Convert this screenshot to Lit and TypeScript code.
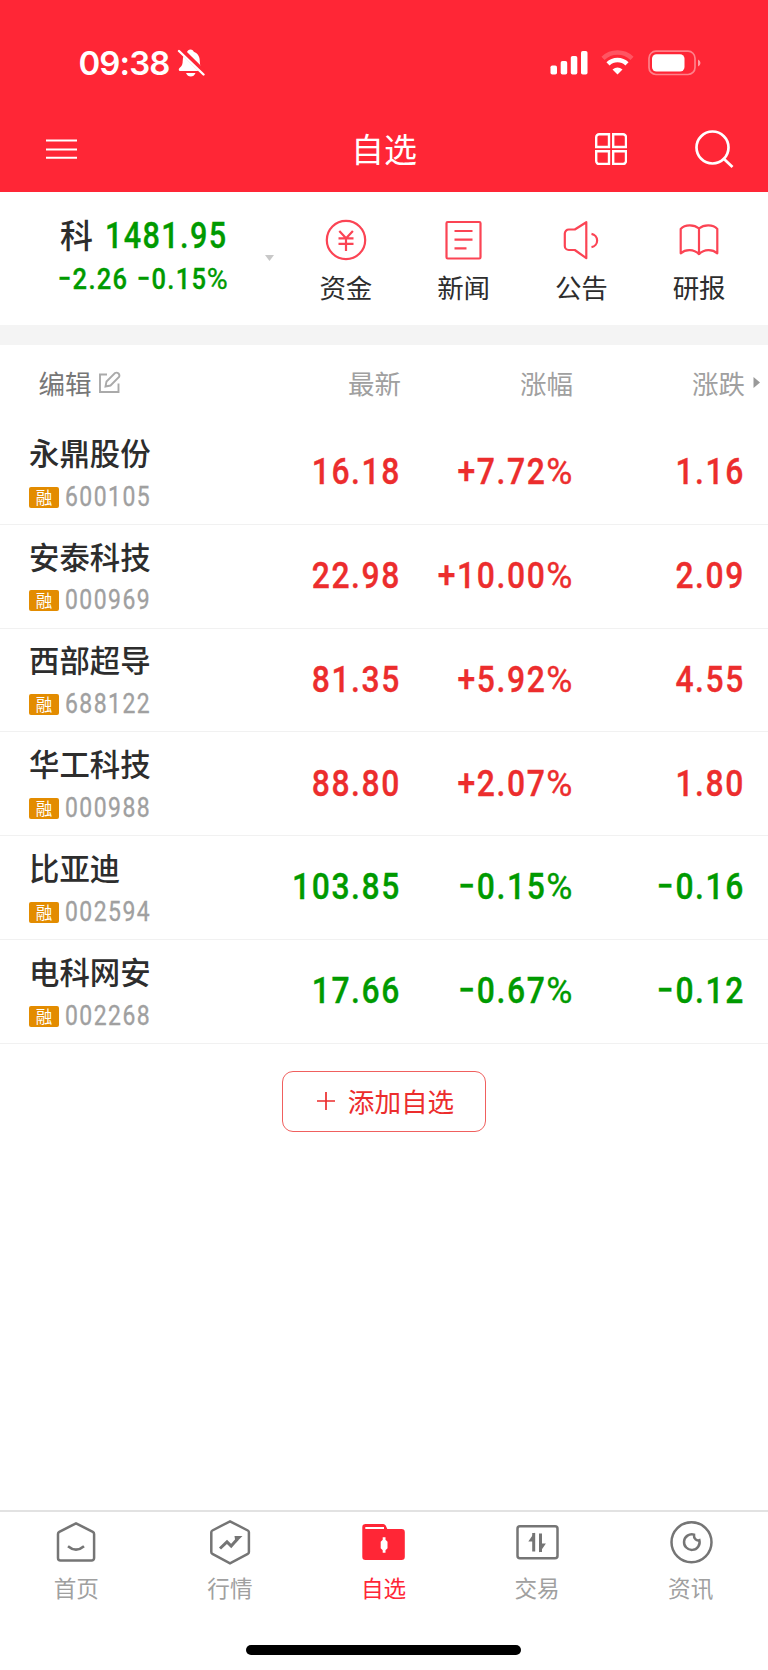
import { LitElement, html, css, svg } from "lit";
import { customElement, property } from "lit/decorators.js";

interface Stock {
  name: string;
  code: string;
  price: string;
  pct: string;
  diff: string;
}

const STOCKS: Stock[] = [
  { name: "永鼎股份", code: "600105", price: "16.18", pct: "+7.72%", diff: "1.16" },
  { name: "安泰科技", code: "000969", price: "22.98", pct: "+10.00%", diff: "2.09" },
  { name: "西部超导", code: "688122", price: "81.35", pct: "+5.92%", diff: "4.55" },
  { name: "华工科技", code: "000988", price: "88.80", pct: "+2.07%", diff: "1.80" },
  { name: "比亚迪", code: "002594", price: "103.85", pct: "−0.15%", diff: "−0.16" },
  { name: "电科网安", code: "002268", price: "17.66", pct: "−0.67%", diff: "−0.12" },
];

/** Condensed figure, with a short minus sign and a light percent sign. */
@customElement("app-figure")
class AppFigure extends LitElement {
  @property() value = "";
  static styles = css`
    :host { display: inline-block; white-space: nowrap; font-family: Roboto, sans-serif; font-weight: 500;
      font-size: 37.500px; line-height: 1; letter-spacing: 0.05em; transform: scaleX(0.85); transform-origin: 100% 50%; -webkit-text-stroke: 0.350px currentColor; }
    .minus { display: inline-block; transform: scaleX(0.92); transform-origin: 60% 50%; }
    .percent { font-weight: 400; letter-spacing: 0.02em; display: inline-block; transform: scaleX(1.12); transform-origin: 100% 50%; margin-left: 0.08em; }
  `;
  render() {
    return [...this.value].map((c) =>
      c === "−" ? html`<span class="minus">−</span>` : c === "%" ? html`<span class="percent">%</span>` : c
    );
  }
}

const ACTIONS = [
  { label: "资金", icon: svg`<circle cx="22" cy="22" r="19.200"/><path d="M15.300 13l6.800 7.300 6.800-7.300M14.500 20.300h15M14.500 25.900h15M22 20.300v12.700"/>` },
  { label: "新闻", icon: svg`<rect x="4.500" y="4" width="34" height="36.500" rx="1.200"/><path d="M12.500 13h18M12.500 21.700h18M12.500 30.300h12"/>` },
  { label: "公告", icon: svg`<path d="M27.300 4.200v36l-11.500-8.200h-6a4 4 0 0 1-4-4V15.500a4 4 0 0 1 4-4h6zM32.500 15.800a6.800 6.800 0 0 1 0 13.400"/>` },
  { label: "研报", icon: svg`<path d="M22 10.500C17 6.300 8 6.200 3.700 11v24.300c5-4.300 13-4.300 18.300.8V10.500c5-4.200 14-4.300 18.300.5v24.300c-5-4.300-13-4.300-18.300.8"/>` },
];

const TABS = [
  { label: "首页", icon: svg`<path d="M23 5.300L39.800 13.800a2.500 2.500 0 0 1 1.300 2.200V40a2.500 2.500 0 0 1-2.500 2.500H7.500A2.500 2.500 0 0 1 5 40V16a2.500 2.500 0 0 1 1.300-2.200z"/><path d="M15 28.200q8 6.800 16 0"/>` },
  { label: "行情", icon: svg`<path d="M23 3.300L40.800 12.500a2 2 0 0 1 1.100 1.800V34a2 2 0 0 1-1.100 1.800L23 45.300 5.400 35.800A2 2 0 0 1 4.300 34V14.300a2 2 0 0 1 1.100-1.800z"/><path class="bar" d="M13 30.500l7-6.600 4.200 4.200 6.200-7"/><path class="solid" d="M27.500 18h8l-7 7z"/>` },
  { label: "自选", icon: svg`<path class="solid" d="M2.300 9.200A3.200 3.200 0 0 1 5.500 6H23.300q1.500 0 2.400 1.500L27.300 11H41.600A3.200 3.200 0 0 1 44.800 14.200V38.800A3.200 3.200 0 0 1 41.600 42H5.500A3.200 3.200 0 0 1 2.300 38.800z"/><path class="slot" d="M5.300 10h18.700"/><path class="candle" d="M22.700 19.300h2.800v2.500l2 2v6.400l-2 2v2.500h-2.800v-2.500l-2-2v-6.400l2-2z"/>` },
  { label: "交易", icon: svg`<rect x="3.500" y="8.200" width="40" height="32" rx="2.500"/><path class="bar" d="M19.700 15v18.500M26.500 15.500v18.500"/><path class="solid" d="M20.500 14.500v9h-6.200zM25.700 34.500v-9h6.200z"/>` },
  { label: "资讯", icon: svg`<circle cx="23.500" cy="24.200" r="20"/><path d="M26 16.600a7.800 7.800 0 1 0 5.400 5.600q-2.200.7-3.800-.8-2-1.800-1.600-4.800z"/>` },
];

@customElement("app-root")
class AppRoot extends LitElement {
  static styles = css`
    * { box-sizing: border-box; }
    :host { display: flex; flex-direction: column; height: 1670px; width: 768px; background: #fff; overflow: hidden;
      font-family: "Noto Sans CJK SC", sans-serif; color: #2d2d2d; line-height: 1; }
    svg { display: block; fill: none; flex: none; }
    header { background: #ff2636; color: #fff; height: 191.700px; flex: none; padding-bottom: 18px; }
    .status { height: 125px; display: flex; align-items: center; padding: 0 67px 0 78.500px; }
    .clock { font: 600 33px/1 Inter, sans-serif; letter-spacing: -0.900px; width: 98px; padding-top: 1px; }
    .bell { margin-right: auto; }
    .wifi { margin: 0 14px 0 13px; }
    .nav { height: 48px; display: flex; align-items: center; padding: 0 34px 0 45.500px; }
    .title { font-size: 33px; font-weight: 400; margin: 0 178px 0 auto; padding-bottom: 1px; }
    .search { margin-left: 68px; }
    .strip { display: flex; height: 133.600px; flex: none; padding-right: 10px; }
    .index { width: 287px; display: flex; align-items: center; padding-left: 57px; }
    .quote { width: 208px; display: flex; flex-direction: column; gap: 10px; padding-bottom: 5px; color: #009a00; }
    .main { display: flex; align-items: center; gap: 12px; padding-left: 3px; }
    .board { color: #2d2d2d; font-size: 33px; font-weight: 500; padding-bottom: 3px; }
    .big { font-size: 36px; letter-spacing: 0.045em; transform-origin: 0 50%; }
    .small { font-size: 30px; letter-spacing: 0.05em; transform-origin: 0 50%; }
    .actions { flex: 1; display: grid; grid-template-columns: repeat(4, 1fr); }
    .action { display: flex; flex-direction: column; align-items: center; padding-top: 26px; gap: 12px; font-size: 26.500px; }
    .action svg { stroke: #fb4454; stroke-width: 2.200; stroke-linejoin: round; }
    .band { height: 19.300px; background: #f4f4f4; flex: none; }
    .cols { display: grid; grid-template-columns: 229px 172px 172px 172px 1fr; align-items: center; }
    .head { height: 76.500px; flex: none; font-size: 26.500px; color: #a0a0a0; text-align: right; }
    .edit { display: flex; align-items: center; gap: 6px; padding-left: 38.500px; color: #777; }
    .more { margin-left: 8px; }
    .row { height: 103.800px; flex: none; border-bottom: 1px solid #f1f1f1; text-align: right; color: #ec2d2d; }
    .row > app-figure { margin-bottom: 1px; }
    .row.down { color: #009a00; }
    .ident { text-align: left; padding: 2.500px 0 0 29px; color: #2d2d2d; }
    .name { font-size: 30.400px; font-weight: 500; white-space: nowrap; }
    .meta { display: flex; align-items: center; gap: 6px; margin-top: 16.500px; }
    .badge { width: 30px; height: 21px; border-radius: 2px; background: #e38c00; color: #fff; font-size: 16.500px; line-height: 21px; text-align: center; }
    .code { font-size: 27px; font-weight: 400; color: #a0a0a0; letter-spacing: 0.063em; transform-origin: 0 50%; }
    .add { align-self: center; margin-top: 27px; width: 204.500px; height: 61px; flex: none; display: flex; align-items: center; justify-content: center;
      gap: 13px; border: 1.300px solid #f0605e; border-radius: 11px; background: none; color: #ec2d2d; font: 400 26.600px/1 "Noto Sans CJK SC", sans-serif; padding: 0 0 0 3px; }
    .tabs { margin-top: auto; height: 160px; flex: none; border-top: 2px solid #e2e2e2; display: flex; flex-direction: column; align-items: center; padding-right: 1px; }
    .tabrow { display: grid; grid-template-columns: repeat(5, 1fr); width: 768px; height: 133px; }
    .tab { display: flex; flex-direction: column; align-items: center; gap: 10.500px; padding-top: 6px; font-size: 22.600px; color: #a0a0a0; }
    .tab svg { stroke: #757575; stroke-width: 2.500; }
    .tab .solid { fill: #757575; stroke: none; }
    .tab .bar { stroke-width: 3; }
    .tab.on { color: #ff2636; }
    .tab.on .solid { fill: #ff2636; }
    .tab .slot { stroke: #fff; stroke-width: 2; }
    .tab .candle { fill: #fff; stroke: none; }
    .home { width: 275px; height: 10px; border-radius: 5px; background: #000; }
  `;

  render() {
    return html`
      <header>
        <div class="status">
          <span class="clock">09:38</span>
          <svg class="bell" width="28" height="30" viewBox="0 0 28 30">
            <path fill="#fff" d="M13.500 1.500c1.800 0 3 1 3.300 2.300 4.200 1.500 6 5 6 9.500 0 4.500 1.500 6.500 3.700 8.500v1.200H2.500c-1-1-1-2 0-3 2.500-2 3.200-4 3.200-7 0-4.700 1.800-7.700 4.500-9.200.3-1.300 1.500-2.300 3.300-2.300zM9 25h9.500q-1.500 3.500-4.700 3.500T9 25z"/>
            <path d="M3.500 1.500l24 23.500" stroke="#ff2636" stroke-width="5.500"/>
            <path d="M2 3l24.500 23.500" stroke="#fff" stroke-width="2.400" stroke-linecap="round"/>
          </svg>
          <svg width="38" height="26" viewBox="0 0 38 26">
            <g fill="#fff"><rect x=".5" y="15.500" width="6.500" height="9" rx="1.800"/><rect x="10.700" y="11" width="6.500" height="13.500" rx="1.800"/><rect x="20.800" y="6" width="6.500" height="18.500" rx="1.800"/><rect x="31" y="1" width="6.500" height="23.500" rx="1.800"/></g>
          </svg>
          <svg class="wifi" width="33" height="26" viewBox="0 0 33 26">
            <path d="M2 8.300a21 21 0 0 1 29 0" stroke="#fff" stroke-opacity=".22" stroke-width="4.500"/>
            <path d="M7 13.800a13.600 13.600 0 0 1 19 0" stroke="#fff" stroke-width="4.500"/>
            <path d="M16.500 24.500l-5-5q5-4.200 10 0z" fill="#fff"/>
          </svg>
          <svg width="53" height="26" viewBox="0 0 53 26">
            <rect x="1" y="1.200" width="46" height="23.300" rx="7" stroke="#fff" stroke-opacity=".42" stroke-width="1.700"/>
            <rect x="4" y="4.200" width="32.500" height="17.300" rx="4.500" fill="#fff"/>
            <path d="M50 9.500q2.500 1 2.500 3.500T50 16.500z" fill="#fff" fill-opacity=".55"/>
          </svg>
        </div>
        <div class="nav">
          <svg width="31" height="20" viewBox="0 0 31 20"><path d="M0 1.500h31M0 10.500h31M0 18.800h31" stroke="#fff" stroke-width="2"/></svg>
          <span class="title">自选</span>
          <svg width="32" height="32" viewBox="0 0 32 32" stroke="#fff" stroke-width="2.400">
            <path d="M14 1.200v12.800H1.200V4.200a3 3 0 0 1 3-3zM18.200 1.200v12.800H31V4.200a3 3 0 0 0-3-3zM14 31V18.200H1.200V28a3 3 0 0 0 3 3zM18.200 31V18.200H31V28a3 3 0 0 1-3 3z"/>
          </svg>
          <svg class="search" width="39" height="39" viewBox="0 0 39 39" stroke="#fff" stroke-width="2.700"><circle cx="17.500" cy="17.500" r="16"/><path d="M29 29l8.500 8"/></svg>
        </div>
      </header>
      <section class="strip">
        <div class="index">
          <div class="quote">
            <div class="main"><span class="board">科</span><app-figure class="big" value="1481.95"></app-figure></div>
            <app-figure class="small" value="−2.26 −0.15%"></app-figure>
          </div>
          <svg width="9" height="6" viewBox="0 0 9 6"><path d="M0 0h9L4.500 6z" fill="#c8c8c8"/></svg>
        </div>
        <div class="actions">
          ${ACTIONS.map((a) => html`<div class="action"><svg width="44" height="44" viewBox="0 0 44 44">${a.icon}</svg><span>${a.label}</span></div>`)}
        </div>
      </section>
      <div class="band"></div>
      <div class="cols head">
        <span class="edit">编辑<svg width="23" height="23" viewBox="0 0 23 23" stroke="#aaa" stroke-width="1.900"><path d="M9 3.500H2v17.500h18.500V12.500M7.500 15.500l1-5L17 2q2-1 3.500.5t.5 3.500l-8.500 8.500z"/></svg></span>
        <span>最新</span><span>涨幅</span><span>涨跌</span>
        <svg class="more" width="8" height="11" viewBox="0 0 8 11"><path d="M.5 0v11L7 5.500z" fill="#999"/></svg>
      </div>
      ${STOCKS.map((s) => html`
        <div class="cols row ${s.diff.startsWith("−") ? "down" : ""}">
          <div class="ident">
            <div class="name">${s.name}</div>
            <div class="meta"><span class="badge">融</span><app-figure class="code" value=${s.code}></app-figure></div>
          </div>
          <app-figure value=${s.price}></app-figure>
          <app-figure value=${s.pct}></app-figure>
          <app-figure value=${s.diff}></app-figure>
        </div>`)}
      <button class="add"><svg width="18" height="18" viewBox="0 0 18 18" stroke="#ec2d2d" stroke-width="1.700"><path d="M0 9h18M9 0v18"/></svg>添加自选</button>
      <footer class="tabs">
        <nav class="tabrow">
          ${TABS.map((t) => html`<div class="tab ${t.label === "自选" ? "on" : ""}"><svg width="46" height="48" viewBox="0 0 46 48">${t.icon}</svg><span>${t.label}</span></div>`)}
        </nav>
        <div class="home"></div>
      </footer>
    `;
  }
}
